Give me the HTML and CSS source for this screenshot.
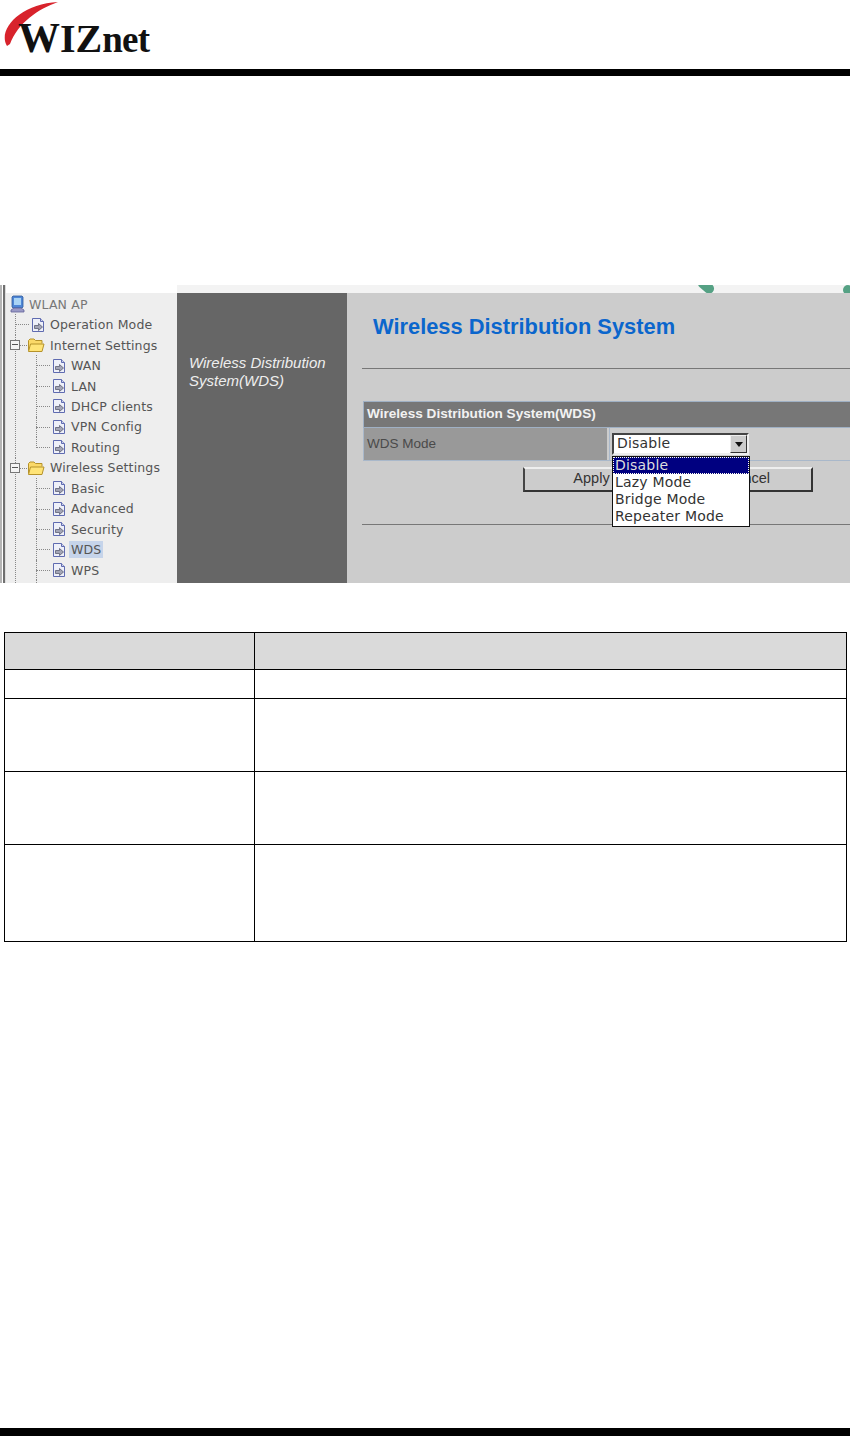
FILE: index.html
```html
<!DOCTYPE html>
<html lang="en">
<head>
  <meta charset="UTF-8">
  <title>WDS settings</title>
  <link rel="stylesheet" href="styles.css">
</head>
<body>
  <svg class="defs" width="0" height="0">
    <symbol id="page" viewBox="0 0 16 16">
      <path d="M2.5 1.500h8l3 3v10h-11z" fill="#eef0f9" stroke="#5f6bb0"/>
      <path d="M10.500 1.500v3h3" fill="#cdd2ea" stroke="#5f6bb0"/>
      <path d="M4.500 8.500h4v-2l4 3.500-4 3.500v-2h-4z" fill="#a3a5b6" stroke="#5a5d72" stroke-width=".8"/>
    </symbol>
    <symbol id="folder" viewBox="0 0 18 16">
      <path d="M1.500 13.500v-10l1.500-1.500h4l1.500 1.500h6.500v3" fill="#fbd968" stroke="#b5922a"/>
      <path d="M1.500 14.500l2-7.500h13.500l-2 7.500z" fill="#ffe477" stroke="#b5922a"/>
    </symbol>
  </svg>

  <div class="page">
    <header class="top">
      <div class="logo">
        <svg class="logo-arc" width="60" height="46" viewBox="0 0 60 46">
          <path d="M6 45C-4 28 20 3 57 1 37 8 17 22 9 43z" fill="#d8232c"/>
        </svg>
        <span class="logo-text"><span class="logo-w">W</span><span class="logo-iz">IZ</span><span class="logo-net">net</span></span>
      </div>
    </header>
    <div class="rule"></div>

    <section class="shot">
      <div class="edge"></div>
      <div class="shot-rest">
        <div class="strip">
          <div class="strip-blank"></div>
          <div class="strip-band">
            <i class="blob blob-a"></i>
            <i class="blob blob-b"></i>
          </div>
        </div>
        <div class="panes">
          <nav class="tree">
            <div class="tree-root">
              <svg class="pc" width="15" height="19" viewBox="0 0 15 19">
                <path d="M3 1h9l1 1v10l-1 1H3l-1-1V2z" fill="#4f86d6" stroke="#2f5a9c" stroke-width=".8"/>
                <rect x="4" y="3" width="7" height="7" fill="#a9d4f5"/>
                <path d="M1 15l3-2h7l3 2v2H1z" fill="#9a9ac6" stroke="#62629a" stroke-width=".8"/>
              </svg>
              WLAN AP
            </div>
            <ul class="level-1">
              <li><div class="node"><svg class="ico"><use href="#page"/></svg>Operation Mode</div></li>
              <li>
                <div class="node"><span class="toggle"></span><svg class="ico-folder"><use href="#folder"/></svg>Internet Settings</div>
                <ul class="level-2">
                  <li><div class="node"><svg class="ico"><use href="#page"/></svg>WAN</div></li>
                  <li><div class="node"><svg class="ico"><use href="#page"/></svg>LAN</div></li>
                  <li><div class="node"><svg class="ico"><use href="#page"/></svg>DHCP clients</div></li>
                  <li><div class="node"><svg class="ico"><use href="#page"/></svg>VPN Config</div></li>
                  <li><div class="node"><svg class="ico"><use href="#page"/></svg>Routing</div></li>
                </ul>
              </li>
              <li>
                <div class="node"><span class="toggle"></span><svg class="ico-folder"><use href="#folder"/></svg>Wireless Settings</div>
                <ul class="level-2">
                  <li><div class="node"><svg class="ico"><use href="#page"/></svg>Basic</div></li>
                  <li><div class="node"><svg class="ico"><use href="#page"/></svg>Advanced</div></li>
                  <li><div class="node"><svg class="ico"><use href="#page"/></svg>Security</div></li>
                  <li><div class="node"><svg class="ico"><use href="#page"/></svg><span class="current">WDS</span></div></li>
                  <li><div class="node"><svg class="ico"><use href="#page"/></svg>WPS</div></li>
                  <li><div class="node"></div></li>
                </ul>
              </li>
            </ul>
          </nav>

          <aside class="side">Wireless Distribution System(WDS)</aside>

          <main class="main">
            <h1 class="title">Wireless Distribution System</h1>
            <hr class="line">
            <div class="form-head">Wireless Distribution System(WDS)</div>
            <div class="form-row">
              <div class="form-label">WDS Mode</div>
              <div class="form-value">
                <div class="select">
                  <span class="select-text">Disable</span>
                  <span class="select-arrow"></span>
                  <ul class="dropdown">
                    <li class="picked">Disable</li>
                    <li>Lazy Mode</li>
                    <li>Bridge Mode</li>
                    <li>Repeater Mode</li>
                  </ul>
                </div>
              </div>
            </div>
            <div class="buttons">
              <div class="btn btn-apply">Apply</div>
              <div class="btn btn-cancel">Cancel</div>
            </div>
            <hr class="line line-low">
          </main>
        </div>
      </div>
    </section>

    <table class="params">
      <tbody>
        <tr class="r-head"><td></td><td></td></tr>
        <tr class="r-one"><td></td><td></td></tr>
        <tr class="r-two"><td></td><td></td></tr>
        <tr class="r-two"><td></td><td></td></tr>
        <tr class="r-three"><td></td><td></td></tr>
      </tbody>
    </table>

    <div class="rule rule-end"></div>
  </div>
</body>
</html>
```

FILE: styles.css
```css
* {
  box-sizing: border-box;
}
body {
  margin: 0;
  background: #fff;
}
ul {
  list-style: none;
  margin: 0;
  padding: 0;
}
.defs {
  position: absolute;
}
.page {
  display: flex;
  flex-direction: column;
  width: 850px;
  height: 1436px;
  overflow: hidden;
}

/* header */
.top {
  height: 69px;
}
.logo {
  position: relative;
  height: 69px;
  padding: 16px 0 0 18px;
}
.logo-arc {
  position: absolute;
  left: 1px;
  top: 1px;
}
.logo-text {
  position: relative;
  font-family: "Liberation Serif", serif;
  font-weight: bold;
  line-height: 44px;
  color: #111;
  white-space: nowrap;
}
.logo-w {
  font-size: 42px;
}
.logo-iz {
  font-size: 40px;
}
.logo-net {
  font-size: 37px;
  letter-spacing: -.8px;
}
.rule {
  height: 7px;
  background: #000;
}
.rule-end {
  height: 8px;
  margin-top: auto;
}

/* screenshot */
.shot {
  display: flex;
  height: 298px;
  margin-top: 209px;
  overflow: hidden;
}
.edge {
  width: 6px;
  background: linear-gradient(90deg, #b5b5b5 0, #b5b5b5 2px, #fff 2px, #fff 3px, #6f6f6f 3px, #6f6f6f 5px, #ddd 5px);
}
.shot-rest {
  flex: 1;
  display: flex;
  flex-direction: column;
  min-width: 0;
}
.strip {
  display: flex;
  height: 8px;
}
.strip-blank {
  width: 171px;
}
.strip-band {
  flex: 1;
  position: relative;
  overflow: hidden;
  background: #f3f3f3;
}
.blob {
  position: absolute;
  background: #55a184;
  border-radius: 50%;
}
.blob-a {
  left: 520px;
  top: -4px;
  width: 18px;
  height: 10px;
  border-radius: 5px;
  transform: rotate(40deg);
}
.blob-b {
  left: 666px;
  top: 0;
  width: 10px;
  height: 10px;
}
.panes {
  flex: 1;
  display: flex;
  min-height: 0;
}

/* tree */
.tree {
  width: 171px;
  background: #eee;
  font-family: "DejaVu Sans", sans-serif;
  font-size: 12.5px;
  letter-spacing: .15px;
  color: #555;
  overflow: hidden;
  padding-top: 1px;
}
.tree-root {
  display: flex;
  align-items: center;
  gap: 4px;
  height: 20.46px;
  padding-left: 4px;
  color: #777;
}
.level-1 {
  margin-left: 9px;
}
.level-2 {
  margin-left: 6px;
}
.tree li {
  position: relative;
  padding-left: 15px;
}
.tree li::before {
  content: "";
  position: absolute;
  left: 0;
  top: 0;
  bottom: 0;
  border-left: 1px dotted #888;
}
.level-2 > li:nth-child(5):last-child::before {
  bottom: 10px;
}
.tree li::after {
  content: "";
  position: absolute;
  left: 0;
  top: 10px;
  width: 14px;
  border-top: 1px dotted #888;
}
.node {
  display: flex;
  align-items: center;
  gap: 4px;
  height: 20.46px;
  position: relative;
  white-space: nowrap;
}
.ico {
  width: 16px;
  height: 16px;
  flex: none;
  position: relative;
  z-index: 1;
}
.ico-folder {
  width: 18px;
  height: 16px;
  flex: none;
  margin-left: -3px;
  margin-right: 1px;
  position: relative;
  z-index: 1;
}
.toggle {
  position: absolute;
  left: -20px;
  top: 5px;
  width: 10px;
  height: 10px;
  border: 1px solid #777;
  background: linear-gradient(#555, #555) center / 6px 1px no-repeat, #f4f4f4;
  z-index: 1;
}
.current {
  background: #c6d4ea;
  padding: 1px 2px;
  margin-left: -2px;
}

/* dark column */
.side {
  width: 170px;
  background: #666;
  color: #eee;
  font-family: "Liberation Sans", sans-serif;
  font-style: italic;
  font-size: 15px;
  line-height: 18px;
  padding: 61px 12px 0;
}

/* main pane */
.main {
  flex: 1;
  min-width: 0;
  background: #ccc;
  padding-left: 15px;
  font-family: "Liberation Sans", sans-serif;
  overflow: hidden;
}
.title {
  margin: 0;
  padding: 20px 0 0 11px;
  height: 75px;
  font-size: 21.85px;
  line-height: 27px;
  font-weight: bold;
  color: #0b66cc;
  white-space: nowrap;
}
.line {
  margin: 0;
  border: 0;
  height: 1px;
  background: #777;
}
.line-low {
  margin-top: 32px;
}
.form-head {
  margin: 32px 0 0 1px;
  height: 27px;
  background: #777;
  border: 1px solid #9fb0c4;
  border-right: 0;
  padding-left: 3px;
  color: #f2f2f2;
  font-size: 13.6px;
  font-weight: bold;
  line-height: 24px;
  white-space: nowrap;
}
.form-row {
  display: flex;
  margin-left: 1px;
  height: 33px;
  border-bottom: 1px solid #a9b8ca;
}
.form-label {
  width: 244px;
  background: #999;
  border-left: 1px solid #a9b8ca;
  padding: 8px 3px 0;
  color: #4a4a4a;
  font-size: 13.5px;
}
.form-value {
  flex: 1;
  margin-left: 2px;
  border-left: 1px solid #a9b8ca;
  padding: 5px 0 0 2px;
}
.select {
  position: relative;
  display: flex;
  justify-content: space-between;
  width: 137px;
  height: 22px;
  background: #fff;
  border: 2px solid;
  border-color: #444 #eee #eee #444;
  font-family: "DejaVu Sans", sans-serif;
  font-size: 14px;
  letter-spacing: .2px;
}
.select-text {
  padding-left: 3px;
  line-height: 17px;
  color: #333;
}
.select-arrow {
  position: relative;
  width: 17px;
  background: #ccc;
  border: 1px solid;
  border-color: #eee #333 #333 #eee;
}
.select-arrow::after {
  content: "";
  position: absolute;
  left: 4px;
  top: 6px;
  border: 4px solid transparent;
  border-top: 5px solid #111;
  border-bottom: 0;
}
.dropdown {
  position: absolute;
  left: -2px;
  top: 21px;
  width: 138px;
  height: 71px;
  background: #fff;
  border: 1px solid #111;
  color: #333;
  z-index: 2;
}
.dropdown li {
  height: 17px;
  line-height: 16px;
  padding-left: 2px;
}
.dropdown .picked {
  background: #000080;
  color: #ddd;
  outline: 1px dotted #ffe;
  outline-offset: -1px;
}
.buttons {
  display: flex;
  gap: 12px;
  margin: 6px 0 0 161px;
}
.btn {
  height: 25px;
  background: #ccc;
  border: 2px solid;
  border-color: #eee #333 #333 #444;
  color: #333;
  font-size: 14.5px;
  line-height: 18px;
  text-align: center;
}
.btn-apply {
  width: 137px;
}
.btn-cancel {
  width: 141px;
  padding-left: 10px;
}

/* parameter table */
.params {
  width: 843px;
  margin: 49px 0 0 4px;
  border-collapse: collapse;
  table-layout: fixed;
}
.params td {
  border: 1.5px solid #000;
  padding: 0;
}
.params td:first-child {
  width: 250px;
}
.r-head td {
  background: #dadada;
  height: 37px;
}
.r-one td {
  height: 29px;
}
.r-two td {
  height: 73px;
}
.r-three td {
  height: 97px;
}
```
